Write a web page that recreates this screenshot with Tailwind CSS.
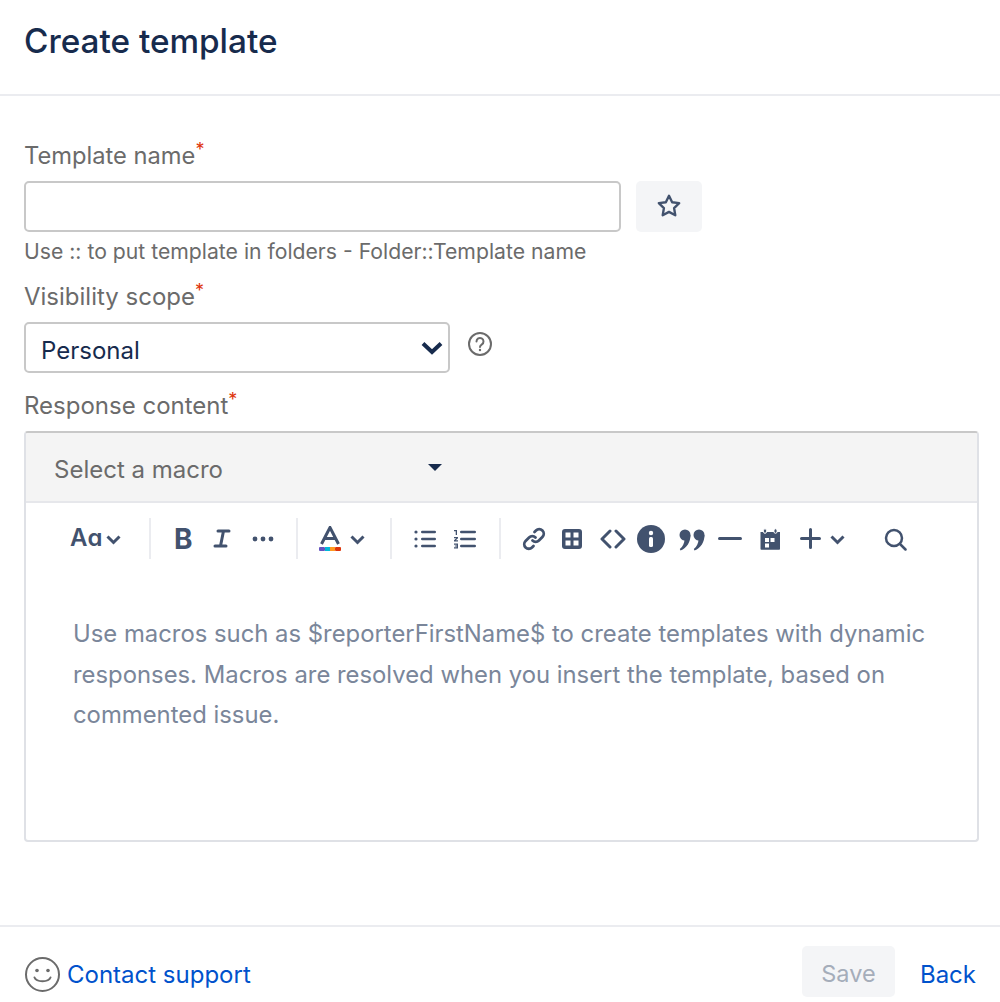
<!DOCTYPE html>
<html lang="en">
<head>
<meta charset="UTF-8">
<title>Create template</title>
<script src="https://cdn.jsdelivr.net/npm/@tailwindcss/browser@4"></script>
</head>
<body class="bg-white font-['Inter',sans-serif]">
<div class="flex flex-col w-[1000px] h-[1002px] overflow-hidden">
  <header class="h-[96px] shrink-0 border-b-2 border-[#ebecf0] pl-6 pt-[21px]">
    <h1 class="text-[33.3px] leading-[40px] font-medium text-[#172b4d]">Create template</h1>
  </header>

  <main class="flex-1 px-6 pt-[45px]">
    <label class="block h-[30px] text-[23.7px] leading-[30px] text-[#6b6b6b]">Template name<span class="text-[#de350b] text-[18px] align-top leading-[18px]">*</span></label>
    <div class="flex gap-[15px] mt-[10px]">
      <input type="text" class="w-[597px] h-[51px] bg-white border-2 border-[#c8c8c8] rounded-[5px]">
      <button class="w-[66px] h-[51px] bg-[#f4f5f7] rounded-[5px] flex items-center justify-center">
        <svg class="-mt-[2px]" width="26" height="26" viewBox="0 0 24 24" fill="none" stroke="#42526e" stroke-width="2.200" stroke-linejoin="round"><path d="M12 2.600l2.900 5.900 6.500.9-4.700 4.600 1.100 6.500-5.800-3.100-5.800 3.100 1.100-6.500-4.700-4.600 6.500-.9z"/></svg>
      </button>
    </div>
    <p class="mt-[6px] h-[26px] text-[21.2px] leading-[26px] text-[#6b6b6b]">Use :: to put template in folders - Folder::Template name</p>

    <label class="block mt-[18px] h-[30px] text-[24px] leading-[30px] text-[#6b6b6b]">Visibility scope<span class="text-[#de350b] text-[18px] align-top leading-[18px]">*</span></label>
    <div class="flex items-start gap-[17px] mt-[10px]">
      <div class="w-[426px] h-[51px] border-2 border-[#c8c8c8] rounded-[5px] flex items-center justify-between pl-[15px] pr-[5px]">
        <span class="text-[24px] text-[#172b4d] pt-[7px]">Personal</span>
        <svg width="22" height="14" viewBox="0 0 22 14" fill="none" stroke="#172b4d" stroke-width="4"><path d="M2 2.500l9 8.500 9-8.500"/></svg>
      </div>
      <svg class="mt-[9px]" width="26" height="26" viewBox="0 0 26 26" fill="none" stroke="#6b6b6b" stroke-width="2"><circle cx="13" cy="13" r="11"/><path d="M9.500 10.500a3.500 3.500 0 1 1 5.400 2.900c-1.200.8-1.900 1.400-1.900 2.600" stroke-linecap="round"/><circle cx="13" cy="19" r="1.200" fill="#6b6b6b" stroke="none"/></svg>
    </div>

    <label class="block mt-[18px] h-[30px] text-[24px] leading-[30px] text-[#6b6b6b]">Response content<span class="text-[#de350b] text-[18px] align-top leading-[18px]">*</span></label>

    <div class="mt-[10px] h-[411px] w-[955px] border-2 border-[#dfe1e6] border-t-[#c8c8c8] rounded-[4px] overflow-hidden">
      <div class="h-[70px] bg-[#f4f4f4] border-b-2 border-[#e6e7eb] flex items-center">
        <div class="w-[427px] ml-[8px] pl-[20px] pr-[16px] flex items-center justify-between">
          <span class="text-[24px] text-[#6b6b6b] pt-[6px]">Select a macro</span>
          <span class="w-0 h-0 border-x-[7px] border-x-transparent border-t-[7px] border-t-[#172b4d] -translate-x-[3px]"></span>
        </div>
      </div>

      <div class="relative h-[72px] mt-[1px] text-[#42526e]">
        <div class="absolute left-[44px] top-[19px] text-[24px] leading-[30px] font-semibold">Aɑ</div>
        <svg class="absolute left-[80px] top-[31px]" width="15" height="10" viewBox="0 0 15 10" fill="none" stroke="#42526e" stroke-width="3"><path d="M1.500 1.500l6 6 6-6"/></svg>
        <div class="absolute left-[123px] top-[14px] w-[2px] h-[41px] bg-[#ebecf0]"></div>
        <div class="absolute left-[148px] top-[18px] text-[28px] leading-[34px] font-bold">B</div>
        <svg class="absolute left-[187px] top-[25px]" width="18" height="19" viewBox="0 0 18 19" fill="none" stroke="#42526e" stroke-width="3" stroke-linecap="round"><path d="M5 2h11M2 17h11M10.500 2L7.500 17"/></svg>
        <svg class="absolute left-[226px] top-[32px]" width="22" height="6" viewBox="0 0 22 6" fill="#42526e"><circle cx="3" cy="3" r="2.400"/><circle cx="11" cy="3" r="2.400"/><circle cx="19" cy="3" r="2.400"/></svg>
        <div class="absolute left-[270px] top-[14px] w-[2px] h-[41px] bg-[#ebecf0]"></div>
        <svg class="absolute left-[293px] top-[22px]" width="22" height="26" viewBox="0 0 22 26"><path d="M2.500 18L11 1.500 19.500 18M6 12.500h10" fill="none" stroke="#42526e" stroke-width="3"/><rect x="0" y="21" width="6" height="4" rx="1" fill="#6554c0"/><rect x="6" y="21" width="5" height="4" fill="#00b8d9"/><rect x="11" y="21" width="5" height="4" fill="#ff991f"/><rect x="16" y="21" width="6" height="4" rx="1" fill="#de350b"/></svg>
        <svg class="absolute left-[324px] top-[31px]" width="15" height="10" viewBox="0 0 15 10" fill="none" stroke="#42526e" stroke-width="3"><path d="M1.500 1.500l6 6 6-6"/></svg>
        <div class="absolute left-[364px] top-[14px] w-[2px] h-[41px] bg-[#ebecf0]"></div>
        <svg class="absolute left-[388px] top-[25px]" width="22" height="20" viewBox="0 0 22 20" fill="#42526e"><circle cx="2" cy="3" r="1.600"/><circle cx="2" cy="10" r="1.600"/><circle cx="2" cy="17" r="1.600"/><rect x="7" y="1.800" width="15" height="2.500" rx="1.200"/><rect x="7" y="8.800" width="15" height="2.500" rx="1.200"/><rect x="7" y="15.800" width="15" height="2.500" rx="1.200"/></svg>
        <svg class="absolute left-[427px] top-[25px]" width="23" height="20" viewBox="0 0 23 20" fill="#42526e"><path d="M1 1h3v5H2.700V2.300H1zM1 8h4v1.300L2.800 11.200H5v1.300H1v-1.300l2.200-1.900H1zM1 14.500h4v5H1v-1.200h2.700v-.8H1.800v-1.100h1.900v-.7H1z"/><rect x="7" y="1.800" width="16" height="2.500" rx="1.200"/><rect x="7" y="8.800" width="16" height="2.500" rx="1.200"/><rect x="7" y="15.800" width="16" height="2.500" rx="1.200"/></svg>
        <div class="absolute left-[473px] top-[14px] w-[2px] h-[41px] bg-[#ebecf0]"></div>
        <svg class="absolute left-[496px] top-[23px]" width="24" height="24" viewBox="0 0 24 24" fill="none" stroke="#42526e" stroke-width="2.800" stroke-linecap="round"><path d="M10.500 13.500a4.500 4.500 0 0 0 6.400 0l3.500-3.500a4.500 4.500 0 0 0-6.400-6.400l-1.500 1.500"/><path d="M13.500 10.500a4.500 4.500 0 0 0-6.400 0l-3.500 3.500a4.500 4.500 0 0 0 6.400 6.400l1.500-1.500"/></svg>
        <svg class="absolute left-[535px] top-[24px]" width="22" height="22" viewBox="0 0 22 22"><path fill-rule="evenodd" fill="#42526e" d="M4 1h14a3 3 0 0 1 3 3v14a3 3 0 0 1-3 3H4a3 3 0 0 1-3-3V4a3 3 0 0 1 3-3zM4.500 4.500v5h5v-5zm8 0v5h5v-5zm-8 8v5h5v-5zm8 0v5h5v-5z"/></svg>
        <svg class="absolute left-[574px] top-[25px]" width="26" height="20" viewBox="0 0 26 20" fill="none" stroke="#42526e" stroke-width="3" stroke-linecap="round" stroke-linejoin="round"><path d="M10 2l-8 8 8 8M16 2l8 8-8 8"/></svg>
        <svg class="absolute left-[611px] top-[21px]" width="28" height="28" viewBox="0 0 28 28"><circle cx="14" cy="14" r="14" fill="#42526e"/><circle cx="14" cy="8" r="2.200" fill="#fff"/><rect x="12" y="12" width="4" height="10" rx="1.500" fill="#fff"/></svg>
        <svg class="absolute left-[653px] top-[25px]" width="26" height="22" viewBox="0 0 26 22" fill="#42526e"><circle cx="6" cy="6" r="5.500"/><path d="M11.500 6C11.500 13 8 19 1.500 21.500L.8 20C4 17.500 5.500 14 5.500 10z"/><circle cx="20" cy="6" r="5.500"/><path d="M25.500 6C25.500 13 22 19 15.500 21.500L14.800 20C18 17.500 19.500 14 19.500 10z"/></svg>
        <div class="absolute left-[692px] top-[33px] w-[24px] h-[3px] bg-[#42526e] rounded-full"></div>
        <svg class="absolute left-[733px] top-[24px]" width="22" height="22" viewBox="0 0 22 22"><path fill="#42526e" d="M1.500 4H21v17a.8.8 0 0 1-.8.8H2.300a.8.8 0 0 1-.8-.8z"/><rect x="4.500" y="0.800" width="3" height="4.500" rx="1.500" fill="#42526e" stroke="#fff" stroke-width="1"/><rect x="15" y="0.800" width="3" height="4.500" rx="1.500" fill="#42526e" stroke="#fff" stroke-width="1"/><path fill="#fff" d="M6 10h4v4H6zM11.500 10h4v4h-4zM6 15.500h4v4H6z"/></svg>
        <svg class="absolute left-[774px] top-[24px]" width="21" height="21" viewBox="0 0 21 21" fill="none" stroke="#42526e" stroke-width="3" stroke-linecap="round"><path d="M10.500 1.500v18M1.500 10.500h18"/></svg>
        <svg class="absolute left-[804px] top-[31px]" width="15" height="10" viewBox="0 0 15 10" fill="none" stroke="#42526e" stroke-width="3"><path d="M1.500 1.500l6 6 6-6"/></svg>
        <svg class="absolute left-[858px] top-[24px]" width="23" height="23" viewBox="0 0 23 23" fill="none" stroke="#42526e" stroke-width="2.500" stroke-linecap="round"><circle cx="10" cy="10" r="8"/><path d="M16 16l5.500 5.500"/></svg>
      </div>

      <p class="px-[47px] pt-[38px] text-[23.85px] leading-[40.5px] text-[#7a869a]">Use macros such as $reporterFirstName$ to create templates with dynamic responses. Macros are resolved when you insert the template, based on commented issue.</p>
    </div>
  </main>

  <footer class="h-[77px] shrink-0 border-t-2 border-[#ebecf0] pl-6 pr-6 flex items-center justify-between">
    <div class="flex items-center gap-[6px] pt-[20px]">
      <svg width="37" height="37" viewBox="0 0 37 37" fill="none" stroke="#6b6b6b" stroke-width="2"><circle cx="18.500" cy="18.500" r="16.500"/><path d="M10.500 21.500c2 5 14 5 16 0" stroke-linecap="round"/><circle cx="13" cy="14.500" r="1.800" fill="#6b6b6b" stroke="none"/><circle cx="24" cy="14.500" r="1.800" fill="#6b6b6b" stroke="none"/></svg>
      <a href="#" class="text-[24px] text-[#0052cc]">Contact support</a>
    </div>
    <div class="flex items-center gap-[25px] pt-[14px]">
      <button class="w-[93px] h-[51px] bg-[#f4f5f7] rounded-[5px] text-[23.5px] text-[#a5adba] pt-[4px]">Save</button>
      <a href="#" class="text-[24px] text-[#0052cc] pt-[6px]">Back</a>
    </div>
  </footer>
</div>
</body>
</html>
